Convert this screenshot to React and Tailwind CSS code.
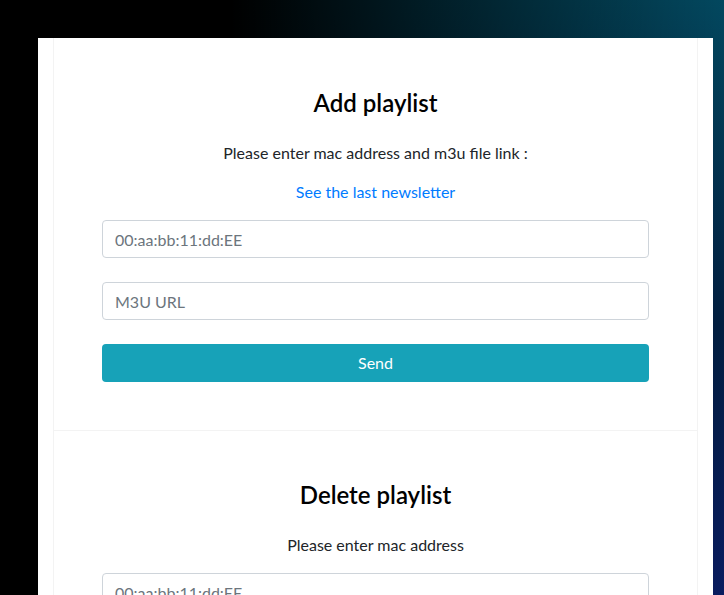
export default function App() {
  const font = "font-['Segoe_UI',Lato,sans-serif]";
  return (
    <div
      className={`min-h-screen pt-[38px] pl-[38px] pr-[11px] bg-[linear-gradient(to_right,#000_32%,rgba(0,0,0,0)_100%),linear-gradient(to_bottom,#03485f_0%,#021e40_45%,#0c1a6e_100%)] ${font}`}
    >
      <div className="bg-white px-[15px] min-h-[557px]">
        <div className="border-x border-b border-[#f3f3f3] px-12 pt-[50px] pb-12 text-center text-[#212529]">
          <h2 className="text-2xl leading-[29px] font-semibold text-black mb-6">Add playlist</h2>
          <p className="text-base leading-6 mb-[15px]">Please enter mac address and m3u file link :</p>
          <a href="#" className="block text-base leading-6 text-[#007bff] mb-4">See the last newsletter</a>
          <input
            className="block w-full h-[38px] px-3 border border-[#ced4da] rounded text-base placeholder:text-[#6c757d] mb-6"
            placeholder="00:aa:bb:11:dd:EE"
          />
          <input
            className="block w-full h-[38px] px-3 border border-[#ced4da] rounded text-base placeholder:text-[#6c757d] mb-6"
            placeholder="M3U URL"
          />
          <button className="block w-full h-[38px] rounded bg-[#17a2b8] text-white text-base">Send</button>
        </div>
        <div className="border-x border-[#f3f3f3] px-12 pt-[49px] pb-12 text-center text-[#212529]">
          <h2 className="text-2xl leading-[29px] font-semibold text-black mb-6">Delete playlist</h2>
          <p className="text-base leading-6 mb-4">Please enter mac address</p>
          <input
            className="block w-full h-[38px] px-3 border border-[#ced4da] rounded text-base placeholder:text-[#6c757d] mb-6"
            placeholder="00:aa:bb:11:dd:EE"
          />
          <button className="block w-full h-[38px] rounded bg-[#dc3545] text-white text-base">Delete</button>
        </div>
      </div>
    </div>
  );
}
